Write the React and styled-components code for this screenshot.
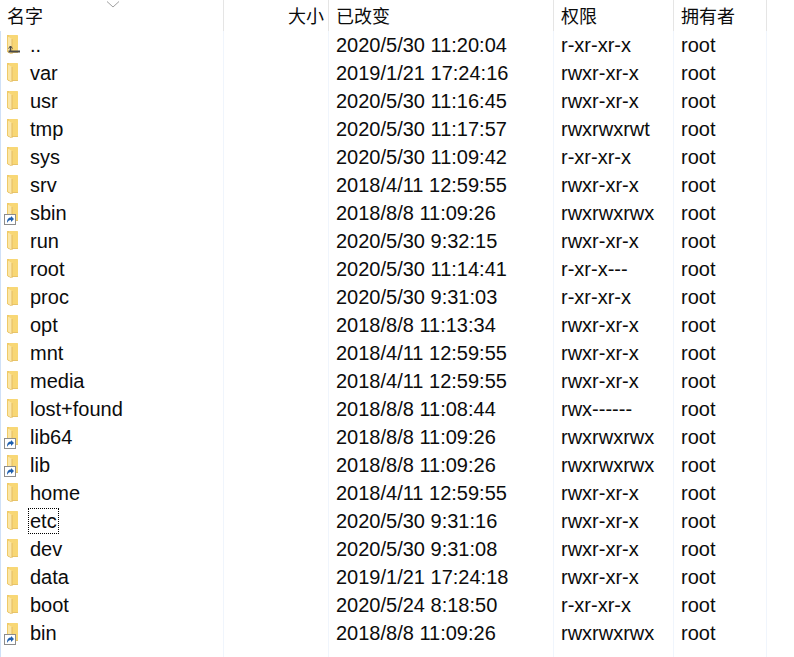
import React from "react";
import styled, { createGlobalStyle } from "styled-components";

const files = [
  ["..", "2020/5/30 11:20:04", "r-xr-xr-x", "up"],
  ["var", "2019/1/21 17:24:16", "rwxr-xr-x"],
  ["usr", "2020/5/30 11:16:45", "rwxr-xr-x"],
  ["tmp", "2020/5/30 11:17:57", "rwxrwxrwt"],
  ["sys", "2020/5/30 11:09:42", "r-xr-xr-x"],
  ["srv", "2018/4/11 12:59:55", "rwxr-xr-x"],
  ["sbin", "2018/8/8 11:09:26", "rwxrwxrwx", "link"],
  ["run", "2020/5/30 9:32:15", "rwxr-xr-x"],
  ["root", "2020/5/30 11:14:41", "r-xr-x---"],
  ["proc", "2020/5/30 9:31:03", "r-xr-xr-x"],
  ["opt", "2018/8/8 11:13:34", "rwxr-xr-x"],
  ["mnt", "2018/4/11 12:59:55", "rwxr-xr-x"],
  ["media", "2018/4/11 12:59:55", "rwxr-xr-x"],
  ["lost+found", "2018/8/8 11:08:44", "rwx------"],
  ["lib64", "2018/8/8 11:09:26", "rwxrwxrwx", "link"],
  ["lib", "2018/8/8 11:09:26", "rwxrwxrwx", "link"],
  ["home", "2018/4/11 12:59:55", "rwxr-xr-x"],
  ["etc", "2020/5/30 9:31:16", "rwxr-xr-x", "focus"],
  ["dev", "2020/5/30 9:31:08", "rwxr-xr-x"],
  ["data", "2019/1/21 17:24:18", "rwxr-xr-x"],
  ["boot", "2020/5/24 8:18:50", "r-xr-xr-x"],
  ["bin", "2018/8/8 11:09:26", "rwxrwxrwx", "link"],
];

const Folder = ({ kind }) => (
  <svg width="20" height="24" viewBox="0 0 20 24">
    <path d="M7 2h10.5a.5.5 0 0 1 .5.5V19H7z" fill="#f8d775" />
    <path d="M7 19h11v.5a.5.5 0 0 1-.5.5H11z" fill="#e8c468" />
    <path d="M8 2v17l3 1.5" fill="none" stroke="#e6bd5f" />
    <path d="M8 3.5 12 6v15l-4-2.500z" fill="#fbe6a6" />
    <path d="M12 6v15" stroke="#e3bb62" />
    {kind === "up" && (
      <g fill="none" stroke="#4a4a48">
        <path d="M8.500 18.500H22" strokeWidth="2" />
        <path d="M10.500 19v-6" strokeWidth="1.500" />
        <path d="M8.500 15.500l2-2.500 2 2.500" strokeWidth="1" />
      </g>
    )}
    {kind === "link" && (
      <g>
        <rect x="4.500" y="13.500" width="11" height="10" fill="#fff" stroke="#8c8c8c" />
        <path d="M7 22c0-4 1.500-5.500 4-5.500V15l3 3-3 3v-2c-2 0-3 1-4 3z" fill="#1f5fae" />
      </g>
    )}
  </svg>
);

const App = () => (
  <>
    <GlobalStyle />
    <Page>
      <SortArrow viewBox="0 0 14 7" width="14" height="7">
        <path d="M1 .5 7 6l6-5.500" fill="none" stroke="#a0a0a0" />
      </SortArrow>
      <Header>
        <HeadCell>名字</HeadCell>
        <HeadCell $right>大小</HeadCell>
        <HeadCell>已改变</HeadCell>
        <HeadCell>权限</HeadCell>
        <HeadCell>拥有者</HeadCell>
      </Header>
      <Body>
        {files.map(([name, date, perm, kind]) => (
          <Row key={name}>
            <NameCell>
              <IconWrap><Folder kind={kind} /></IconWrap>
              <Name $focus={kind === "focus"}>{name}</Name>
            </NameCell>
            <Cell />
            <Cell>{date}</Cell>
            <Cell>{perm}</Cell>
            <Cell>root</Cell>
          </Row>
        ))}
        <Filler>
          <Cell /><Cell /><Cell /><Cell /><Cell />
        </Filler>
      </Body>
    </Page>
  </>
);

export default App;

const GlobalStyle = createGlobalStyle`
  html, body { margin: 0; padding: 0; background: #fff; }
`;

const columns = "224px 105px 225px 120px 93px";

const Page = styled.div`
  position: relative;
  width: 794px;
  height: 657px;
  overflow: hidden;
  display: flex;
  flex-direction: column;
  background: #fff;
  color: #0c0c0c;
  font-family: "Liberation Sans", "Noto Sans CJK SC", sans-serif;
  font-size: 20px;
`;

const SortArrow = styled.svg`
  position: absolute;
  left: 106px;
  top: 1px;
`;

const Header = styled.div`
  display: grid;
  grid-template-columns: ${columns};
  height: 31px;
  flex: none;
`;

const HeadCell = styled.div`
  display: flex;
  align-items: center;
  justify-content: ${(p) => (p.$right ? "flex-end" : "flex-start")};
  padding: ${(p) => (p.$right ? "0 4px 0 0" : "0 0 0 7px")};
  border-right: 1px solid #e5e5e5;
  font-size: 18px;
  padding-bottom: 2px;
`;

const Body = styled.div`
  flex: 1;
  display: flex;
  flex-direction: column;
  box-shadow: inset 2px 0 0 -1px #cfe0f7;
`;

const Row = styled.div`
  display: grid;
  grid-template-columns: ${columns};
  height: 28px;
  flex: none;
`;

const Filler = styled(Row)`
  flex: 1;
  height: auto;
`;

const Cell = styled.div`
  display: flex;
  align-items: center;
  padding-left: 7px;
  border-right: 1px solid #f0f5fc;
  white-space: nowrap;
`;

const NameCell = styled(Cell)`
  padding-left: 0;
`;

const IconWrap = styled.div`
  display: flex;
  width: 30px;
  flex: none;
`;

const Name = styled.span`
  line-height: 24px;
  padding: 0 1px;
  margin-left: -1px;
  outline: ${(p) => (p.$focus ? "1px dotted #000" : "none")};
`;
